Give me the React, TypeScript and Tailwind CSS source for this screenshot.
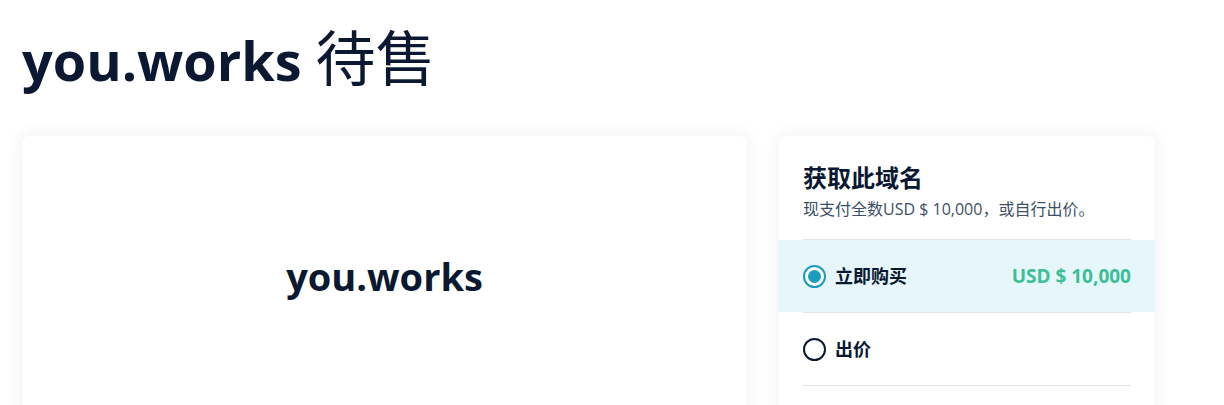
import { useState } from "react";

const sans = "font-['Open_Sans','Noto_Sans_CJK_SC',sans-serif]";

type Option = { id: string; label: string; price?: string };

const options: Option[] = [
  { id: "buy", label: "立即购买", price: "USD $ 10,000" },
  { id: "offer", label: "出价" },
];

function Radio({ checked }: { checked: boolean }) {
  return checked ? (
    <span className="flex h-[23px] w-[23px] shrink-0 items-center justify-center rounded-full border-2 border-[#1a9cbd] bg-white">
      <span className="h-[13px] w-[13px] rounded-full bg-[#1a9cbd]" />
    </span>
  ) : (
    <span className="h-[23px] w-[23px] shrink-0 rounded-full border-2 border-[#0a1931] bg-white" />
  );
}

export default function App() {
  const [selected, setSelected] = useState("buy");

  return (
    <div className={`min-h-screen bg-white text-[#0a1931] ${sans}`}>
      <div className="px-[22px] pt-[17px]">
        {/* Page heading */}
        <h1 className="h-[76px] text-[54px] leading-[76px] font-bold">
          you.works{" "}
          <span className="font-['Noto_Sans_CJK_SC',sans-serif] text-[60px] leading-[76px] font-normal">待售</span>
        </h1>

        <div className="mt-[43px] flex items-start gap-[32px]">
          {/* Domain preview */}
          <div className="flex h-[300px] w-[725px] items-start justify-center rounded-lg bg-white pt-[114px] shadow-[0_0_18px_rgba(0,0,0,0.07)]">
            <span className="text-[38px] leading-[52px] font-bold">you.works</span>
          </div>

          {/* Purchase panel */}
          <div className="w-[376px] rounded-lg bg-white pb-[40px] shadow-[0_0_18px_rgba(0,0,0,0.07)]">
            <div className="px-6 pt-[25px] pb-[19px]">
              <h2 className="text-[24px] leading-[34px] font-bold">获取此域名</h2>
              <p className="mt-[3px] text-[16px] leading-[22px] text-[#3d4f66]">
                现支付全数USD $ 10,000，或自行出价。
              </p>
            </div>

            <div className="border-t border-[#e2e6ea] mx-6" />
            {options.map((o) => {
              const active = selected === o.id;
              return (
                <div key={o.id}>
                  <button
                    type="button"
                    onClick={() => setSelected(o.id)}
                    className={`flex h-[72px] w-full items-center px-6 text-left ${active ? "bg-[#e6f6fb]" : "bg-white"}`}
                  >
                    <Radio checked={active} />
                    <span className="ml-[9px] text-[18px] font-bold">{o.label}</span>
                    {o.price && (
                      <span className="ml-auto text-[19px] font-bold text-[#3bbf95]">{o.price}</span>
                    )}
                  </button>
                  <div className="border-t border-[#e2e6ea] mx-6" />
                </div>
              );
            })}
          </div>
        </div>
      </div>
    </div>
  );
}
